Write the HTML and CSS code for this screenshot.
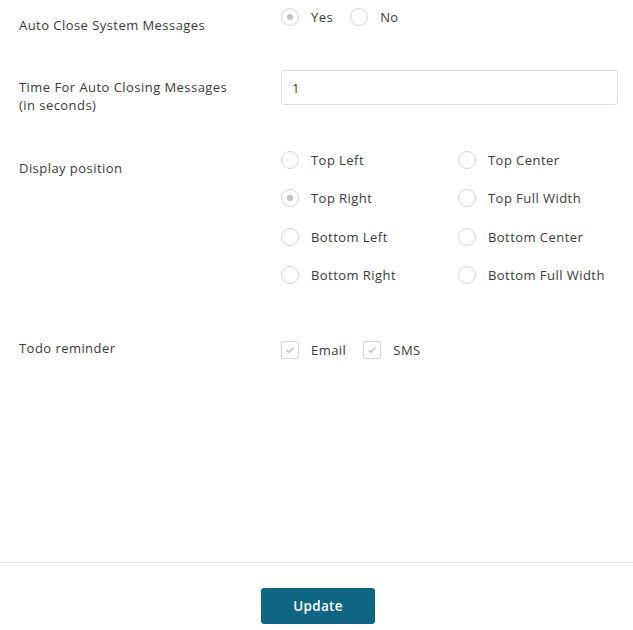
FILE: index.html
```html
<!DOCTYPE html>
<html>
<head>
<meta charset="utf-8">
<link rel="stylesheet" href="styles.css">
</head>
<body>
<div class="page">
  <div class="content">
    <div class="row row-auto">
      <div class="label">Auto Close System Messages</div>
      <div class="field inline">
        <label class="opt"><span class="radio checked"></span><span>Yes</span></label>
        <label class="opt"><span class="radio"></span><span>No</span></label>
      </div>
    </div>
    <div class="row row-time">
      <div class="label">Time For Auto Closing Messages<br>(in seconds)</div>
      <div class="field">
        <div class="input">1</div>
      </div>
    </div>
    <div class="row row-pos">
      <div class="label">Display position</div>
      <div class="field grid2">
        <label class="opt"><span class="radio"></span><span>Top Left</span></label>
        <label class="opt"><span class="radio"></span><span>Top Center</span></label>
        <label class="opt"><span class="radio checked"></span><span>Top Right</span></label>
        <label class="opt"><span class="radio"></span><span>Top Full Width</span></label>
        <label class="opt"><span class="radio"></span><span>Bottom Left</span></label>
        <label class="opt"><span class="radio"></span><span>Bottom Center</span></label>
        <label class="opt"><span class="radio"></span><span>Bottom Right</span></label>
        <label class="opt"><span class="radio"></span><span>Bottom Full Width</span></label>
      </div>
    </div>
    <div class="row row-todo">
      <div class="label">Todo reminder</div>
      <div class="field inline">
        <label class="opt"><span class="check"><svg width="10" height="8" viewBox="0 0 10 8"><path d="M1.5 4.2 L3.8 6.3 L8.5 1.5" fill="none" stroke="#b9bfcf" stroke-width="1.2"/></svg></span><span>Email</span></label>
        <label class="opt"><span class="check"><svg width="10" height="8" viewBox="0 0 10 8"><path d="M1.5 4.2 L3.8 6.3 L8.5 1.5" fill="none" stroke="#b9bfcf" stroke-width="1.2"/></svg></span><span>SMS</span></label>
      </div>
    </div>
  </div>
  <div class="footer">
    <button class="btn">Update</button>
  </div>
</div>
</body>
</html>
```

FILE: styles.css
```css
html, body {
  margin: 0;
  padding: 0;
  background: #fff;
}
body {
  font-family: "Open Sans", "Noto Sans", sans-serif;
  font-size: 13px;
  letter-spacing: 0.45px;
  color: #3a3a3a;
}
.page {
  width: 633px;
  height: 630px;
  display: flex;
  flex-direction: column;
}
.content {
  height: 562px;
  box-sizing: border-box;
  padding-left: 19px;
}
.row {
  display: grid;
  grid-template-columns: 262px 337px;
}
.label {
  line-height: 18px;
}
.opt {
  display: flex;
  align-items: center;
  gap: 12px;
  height: 18px;
}
.inline {
  display: flex;
  gap: 17px;
}
.radio {
  width: 16px;
  height: 16px;
  border: 1px solid #d3d7e3;
  border-radius: 50%;
  display: flex;
  align-items: center;
  justify-content: center;
  flex: none;
}
.radio.checked::after {
  content: "";
  width: 6px;
  height: 6px;
  border-radius: 50%;
  background: #bcc0d0;
}
.check {
  width: 16px;
  height: 16px;
  border: 1px solid #d3d7e3;
  border-radius: 2px;
  display: flex;
  align-items: center;
  justify-content: center;
  flex: none;
}

.row-auto { padding-top: 8px; }
.row-auto .label { padding-top: 8px; }

.row-time { margin-top: 36px; }
.row-time .label { padding-top: 8px; }
.input {
  height: 35px;
  box-sizing: border-box;
  border: 1px solid #dcdfe6;
  border-radius: 3px;
  padding: 0 10px;
  display: flex;
  align-items: center;
}

.row-pos { margin-top: 37px; }
.row-pos .label { padding-top: 8px; }
.grid2 {
  display: grid;
  grid-template-columns: 177px 1fr;
  row-gap: 20.3px;
}

.row-todo { margin-top: 57px; }
.row-todo .label { margin-top: -2px; }
.row-todo .inline { gap: 17px; }

.footer {
  border-top: 1px solid #e3e3e3;
  display: flex;
  justify-content: center;
  padding-top: 25px;
  padding-left: 3px;
}
.btn {
  width: 114px;
  height: 36px;
  border: none;
  border-radius: 3px;
  background: #0f6582;
  color: #fff;
  font-family: "Open Sans", "Noto Sans", sans-serif;
  font-size: 13.5px;
  font-weight: 600;
  letter-spacing: 0.3px;
}
```
